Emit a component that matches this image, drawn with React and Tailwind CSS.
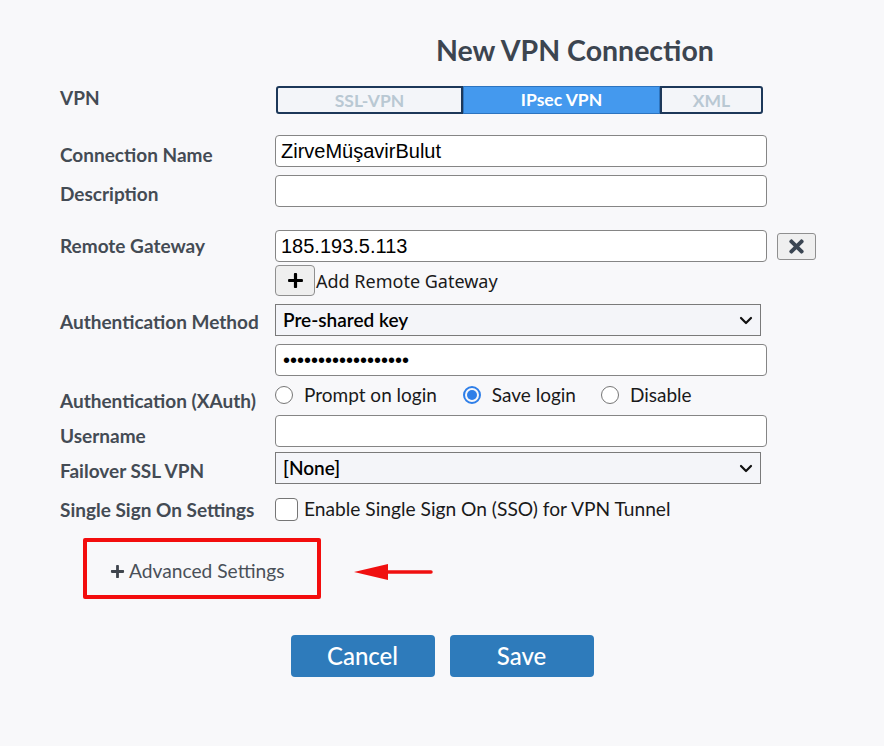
import { FaPlus, FaTimes } from "react-icons/fa";

const lato = "font-['Lato','Liberation_Sans',sans-serif]";
const arial = "font-['Liberation_Sans','Arial',sans-serif]";

function Label({ children, className = "" }) {
  return (
    <div className={`w-[215px] shrink-0 text-[19px] font-bold text-[#444b54] ${lato} ${className}`}>
      {children}
    </div>
  );
}

function TextInput({ value = "", className = "" }) {
  return (
    <input
      readOnly
      value={value}
      className={`w-[492px] h-full rounded-[4px] border border-[#858585] bg-white pl-[5px] text-[20px] text-black outline-none ${arial} ${className}`}
    />
  );
}

function Select({ value }) {
  return (
    <div className="relative w-[486px] h-full">
      <select
        defaultValue={value}
        className={`w-full h-full appearance-none border border-[#7a7a7a] bg-[#f4f5f9] pl-[7px] text-[19px] font-semibold text-black outline-none ${lato}`}
      >
        <option>{value}</option>
      </select>
      <svg
        className="pointer-events-none absolute right-[8px] top-1/2 -translate-y-1/2 w-[14px] h-[10px]"
        viewBox="0 0 14 10"
        fill="none"
        stroke="#111"
        strokeWidth="2.2"
        strokeLinecap="round"
        strokeLinejoin="round"
      >
        <path d="M2 3l5 5 5-5" />
      </svg>
    </div>
  );
}

function Radio({ checked, label }) {
  return (
    <label className="flex items-center gap-[11px]">
      {checked ? (
        <span className="w-[18px] h-[18px] rounded-full border-[2px] border-[#2f7fe8] flex items-center justify-center">
          <span className="w-[10px] h-[10px] rounded-full bg-[#2f7fe8]" />
        </span>
      ) : (
        <span className="w-[18px] h-[18px] rounded-full border-[1.5px] border-[#767676] bg-white" />
      )}
      <span className={`text-[19px] text-[#1a1a1a] ${lato}`}>{label}</span>
    </label>
  );
}

export default function App() {
  return (
    <div className="min-h-screen bg-[#f8f8fa] pl-[60px]">
      {/* Heading centred over the form column */}
      <div className="ml-[215px] w-[600px] pt-[33px] text-center">
        <h1 className={`text-[28.5px] leading-[35px] font-bold text-[#3c4550] ${lato}`}>New VPN Connection</h1>
      </div>

      {/* VPN type */}
      <div className="mt-[18px] flex items-center h-[28px]">
        <Label className="-mt-[3px]">VPN</Label>
        <div className={`flex h-full ml-px text-[17.5px] font-bold ${lato}`}>
          <button className="w-[187px] rounded-l-[3px] border-2 border-[#1d3859] bg-[#f3f5f9] text-[#b9c8d3]">SSL-VPN</button>
          <button className="w-[197px] border border-[#2d74bf] bg-[#4499ee] text-white">IPsec VPN</button>
          <button className="w-[103px] rounded-r-[3px] border-2 border-[#1d3859] bg-[#f3f5f9] text-[#b9c8d3]">XML</button>
        </div>
      </div>

      <div className="mt-[21px] flex items-center h-[32px]">
        <Label className="mt-[8px]">Connection Name</Label>
        <TextInput value="ZirveMüşavirBulut" />
      </div>

      <div className="mt-[8px] flex items-center h-[32px]">
        <Label className="mt-[6px]">Description</Label>
        <TextInput />
      </div>

      {/* Remote gateway with remove button */}
      <div className="mt-[23px] flex items-center h-[32px]">
        <Label>Remote Gateway</Label>
        <TextInput value="185.193.5.113" />
        <button className="ml-[10px] w-[39px] h-[27px] rounded-[3px] border border-[#8f8f8f] bg-[#efefef] flex items-center justify-center text-[#3a4552]">
          <FaTimes className="w-[21px] h-[21px]" />
        </button>
      </div>

      <div className="mt-[3px] flex items-center h-[31px]">
        <div className="w-[215px] shrink-0" />
        <button className="w-[40px] h-full rounded-[4px] border border-[#8f8f8f] bg-[#efefef] flex items-center justify-center text-black">
          <FaPlus className="w-[17px] h-[17px]" />
        </button>
        <span className={`ml-px mt-[2px] text-[18px] text-[#1a1a1a] font-['Noto_Sans','Open_Sans',sans-serif]`}>
          Add Remote Gateway
        </span>
      </div>

      <div className="mt-[8px] flex items-center h-[32px]">
        <Label className="mt-[5px]">Authentication Method</Label>
        <Select value="Pre-shared key" />
      </div>

      <div className="mt-[8px] flex items-center h-[32px]">
        <div className="w-[215px] shrink-0" />
        <TextInput value="••••••••••••••••••" className="pl-[7px]" />
      </div>

      {/* XAuth options */}
      <div className="mt-[8px] flex items-center h-[22px]">
        <Label className="mt-[12px]">Authentication (XAuth)</Label>
        <div className="flex items-center">
          <Radio label="Prompt on login" />
          <div className="ml-[26px]">
            <Radio checked label="Save login" />
          </div>
          <div className="ml-[25px]">
            <Radio label="Disable" />
          </div>
        </div>
      </div>

      <div className="mt-[9px] flex items-center h-[32px]">
        <Label className="mt-[10px]">Username</Label>
        <TextInput />
      </div>

      <div className="mt-[5px] flex items-center h-[32px]">
        <Label className="mt-[6px]">Failover SSL VPN</Label>
        <Select value="[None]" />
      </div>

      <div className="mt-[13px] flex items-center h-[24px]">
        <Label className="mt-[3px]">Single Sign On Settings</Label>
        <span className="w-[23px] h-[23px] rounded-[4px] border border-[#767676] bg-white" />
        <span className={`ml-[6px] text-[19.2px] text-[#1a1a1a] ${lato}`}>
          Enable Single Sign On (SSO) for VPN Tunnel
        </span>
      </div>

      {/* Advanced settings toggle, highlighted */}
      <div className="mt-[17px] flex items-center">
        <div className="ml-[23px] w-[238px] h-[61px] rounded-[2px] border-4 border-[#f30d0d] flex items-center pl-[23px] pt-[6px]">
          <FaPlus className="w-[15px] h-[15px] text-[#3f454d]" />
          <span className={`ml-[4px] text-[19.2px] text-[#4a5058] ${lato}`}>Advanced Settings</span>
        </div>
        <svg className="ml-[33px] mt-[7px] w-[80px] h-[18px]" viewBox="0 0 80 18">
          <path d="M22 9H77" stroke="#f01010" strokeWidth="3.5" strokeLinecap="round" />
          <path d="M0 9L34 1V17Z" fill="#f01010" />
        </svg>
      </div>

      {/* Form actions */}
      <div className={`mt-[36px] -ml-[60px] flex justify-center gap-[15px] text-[24px] font-medium text-white ${lato}`}>
        <button className="w-[144px] h-[42px] rounded-[4px] bg-[#2e7bbb]">Cancel</button>
        <button className="w-[144px] h-[42px] rounded-[4px] bg-[#2e7bbb]">Save</button>
      </div>
    </div>
  );
}
